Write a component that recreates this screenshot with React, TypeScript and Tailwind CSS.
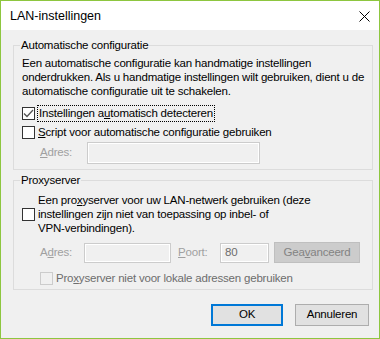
import React from "react";

type BoxProps = { checked?: boolean; disabled?: boolean };

const CheckBox: React.FC<BoxProps> = ({ checked, disabled }) => (
  <span
    className={`w-[13px] h-[13px] shrink-0 border flex items-center justify-center ${
      disabled ? "border-[#cccccc] bg-[#f0f0f0]" : "border-[#333333] bg-white"
    }`}
  >
    {checked && (
      <svg width="11" height="11" viewBox="0 0 11 11">
        <path d="M1 5.5 L4 8.5 L10 2" fill="none" stroke="#555555" strokeWidth="1.3" />
      </svg>
    )}
  </span>
);

const TextBox: React.FC<{ className: string; value?: string }> = ({ className, value }) => (
  <div
    className={`border border-[#cccccc] bg-[#f0f0f0] shadow-[inset_0_0_0_1px_#ffffff] pl-[4px] flex items-center text-[#6d6d6d] ${className}`}
  >
    {value}
  </div>
);

const GroupBox: React.FC<{ title: string; className: string; children: React.ReactNode }> = ({
  title,
  className,
  children,
}) => (
  <div className={`relative w-[360px] border border-[#dcdcdc] ${className}`}>
    <span className="absolute top-[-8px] left-[6px] px-[1px] bg-[#f0f0f0] leading-[14px]">
      {title}
    </span>
    {children}
  </div>
);

const App: React.FC = () => (
  <div className="w-[380px] h-[339px] border border-[#8dc63f] bg-[#f0f0f0] flex flex-col text-[11.5px] tracking-[-0.2px] text-black whitespace-nowrap font-['Liberation_Sans',Arial,sans-serif]">
    <div className="h-[29px] bg-white flex items-center justify-between pl-[9px] pr-[9px]">
      <span className="text-[12.5px] tracking-normal mt-[2px]">LAN-instellingen</span>
      <svg width="11" height="11" viewBox="0 0 11 11" className="mt-[2px]">
        <path d="M0.5 0.5 L10.5 10.5 M10.5 0.5 L0.5 10.5" stroke="#000" strokeWidth="1" />
      </svg>
    </div>

    <div className="flex-1 flex flex-col pl-[12px] pt-[15px]">
      <GroupBox title="Automatische configuratie" className="h-[125px]">
        <div className="pl-[8px] pt-[10px] flex flex-col">
          <p className="leading-[14px]">
            Een automatische configuratie kan handmatige instellingen
            <br />
            onderdrukken. Als u handmatige instellingen wilt gebruiken, dient u de
            <br />
            automatische configuratie uit te schakelen.
          </p>
          <label className="mt-[6px] h-[19px] flex items-center gap-[2px]">
            <CheckBox checked />
            <span className="border border-dotted border-black px-[1px] leading-[15px]">
              Instellingen a<u>u</u>tomatisch detecteren
            </span>
          </label>
          <label className="h-[19px] flex items-center gap-[3px]">
            <CheckBox />
            <span>
              <u>S</u>cript voor automatische configuratie gebruiken
            </span>
          </label>
          <div className="flex items-center">
            <span className="ml-[18px] w-[47px] text-[#a0a0a0]">
              <u>A</u>dres:
            </span>
            <TextBox className="w-[173px] h-[22px]" />
          </div>
        </div>
      </GroupBox>

      <GroupBox title="Proxyserver" className="h-[110px] mt-[10px]">
        <div className="pl-[8px] pt-[12px] flex flex-col">
          <label className="flex items-center gap-[3px]">
            <CheckBox />
            <span className="leading-[14px]">
              Een pro<u>x</u>yserver voor uw LAN-netwerk gebruiken (deze
              <br />
              instellingen zijn niet van toepassing op inbel- of
              <br />
              VPN-verbindingen).
            </span>
          </label>
          <div className="mt-[7px] flex items-center">
            <span className="ml-[18px] w-[44px] text-[#a0a0a0]">
              A<u>d</u>res:
            </span>
            <TextBox className="w-[87px] h-[20px]" />
            <span className="ml-[7px] w-[42px] text-[#a0a0a0]">
              <u>P</u>oort:
            </span>
            <TextBox className="w-[49px] h-[20px]" value="80" />
            <button className="ml-[5px] w-[86px] h-[21px] border border-[#bfbfbf] bg-[#cccccc] text-[#838383]">
              Gea<u>v</u>anceerd
            </button>
          </div>
          <label className="mt-[7px] ml-[18px] flex items-center gap-[3px] text-[#6d6d6d]">
            <CheckBox disabled />
            <span>
              Pro<u>x</u>yserver niet voor lokale adressen gebruiken
            </span>
          </label>
        </div>
      </GroupBox>

      <div className="mt-[14px] pr-[10px] flex justify-end gap-[12px]">
        <button className="w-[72px] h-[22px] border-2 border-[#0078d7] bg-[#e1e1e1]">OK</button>
        <button className="w-[74px] h-[22px] border border-[#adadad] bg-[#e1e1e1]">
          Annuleren
        </button>
      </div>
    </div>
  </div>
);

export default App;
